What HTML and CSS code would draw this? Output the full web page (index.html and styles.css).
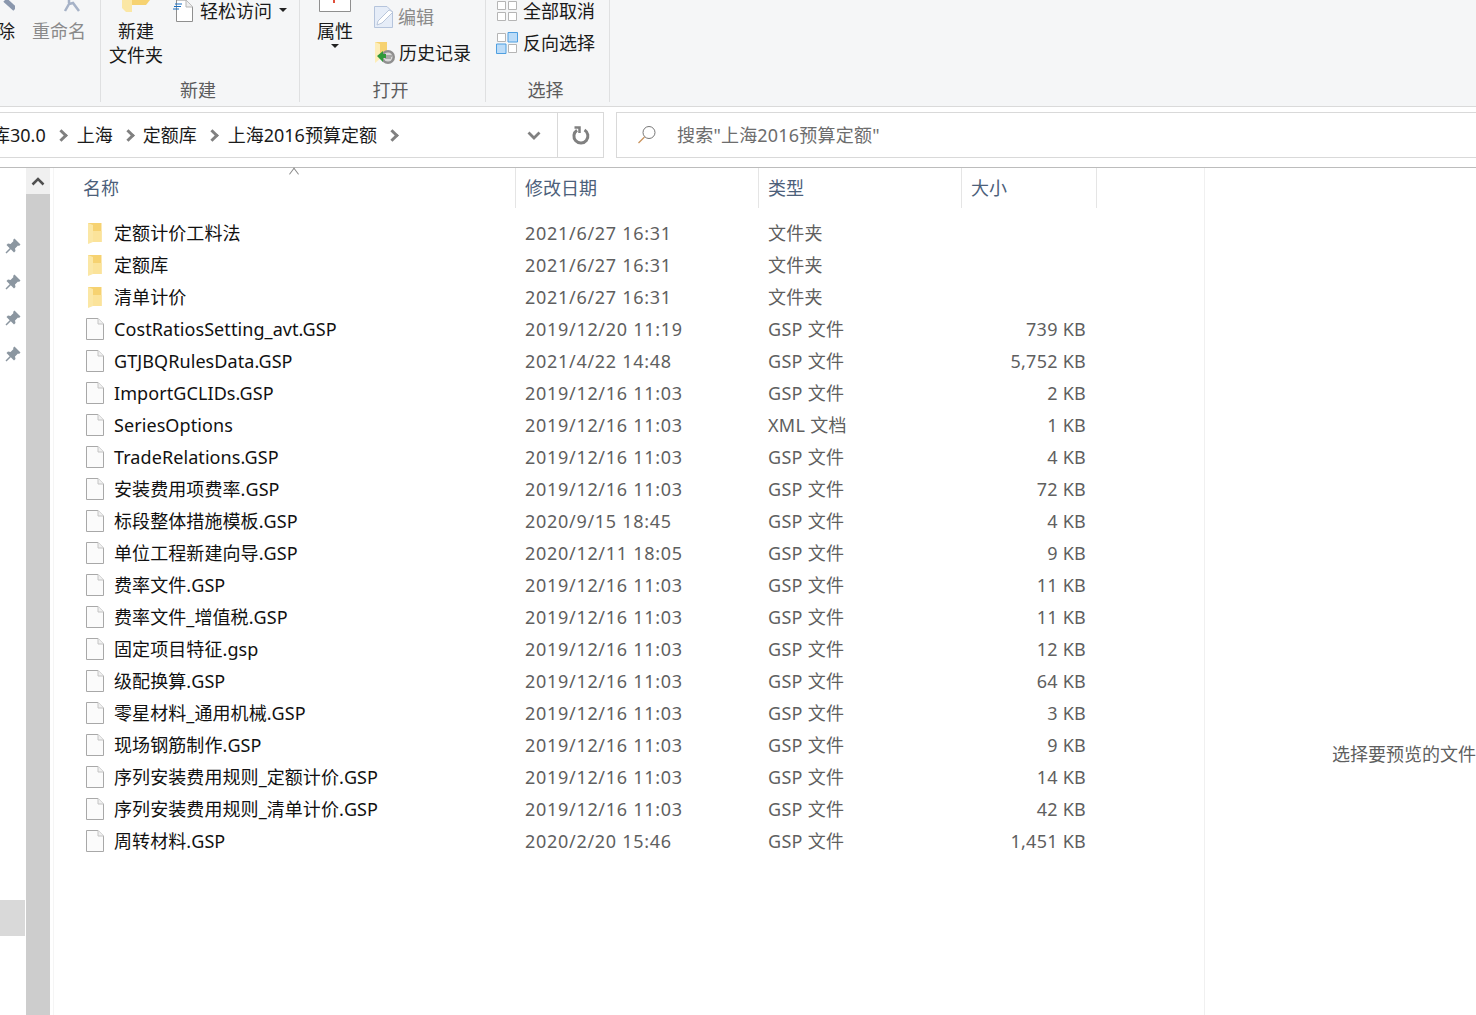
FILE: index.html
```html
<!DOCTYPE html>
<html lang="zh-CN">
<head>
  <meta charset="UTF-8">
  <title>上海2016预算定额</title>
  <link rel="stylesheet" href="styles.css">
</head>
<body>

<svg class="defs" width="0" height="0">
  <symbol id="doc" viewBox="0 0 18 22">
    <path d="M.5 .5H12L17.500 6V21.500H.5Z" fill="#fbfbfb" stroke="#a8a8a8"/>
    <path d="M12 .5V6H17.500" fill="#f0f0f0" stroke="#c4c4c4"/>
  </symbol>
  <symbol id="folder" viewBox="0 0 18 22">
    <path d="M2 1H15.500V20H2Z" fill="#f6d271"/>
    <path d="M7 9H15.500V20H7Z" fill="#fbe39a"/>
    <path d="M2 1L7 3V20L2 22Z" fill="#fbe7a5"/>
  </symbol>
  <symbol id="pin" viewBox="0 0 16 16">
    <path d="M9.500 .5L15.500 6.500L14 8L13 7.500L10 10.500L10.500 13L9 14.500L5.800 11.300L1.500 15.500L.5 14.500L4.700 10.200L1.500 7L3 5.500L5.500 6L8.500 3L8 2Z" fill="#8b96a0"/>
  </symbol>
</svg>

<div class="ribbon">
  <div class="group group-edit">
    <div class="group-body">
      <div class="big-btn btn-delete">
        <svg class="big-icon" width="36" height="12" viewBox="0 0 36 12"><path d="M26 0L36 9" stroke="#8a97ad" stroke-width="5" fill="none"/></svg>
        <span>删除</span>
      </div>
      <div class="big-btn btn-rename muted">
        <svg class="big-icon" width="54" height="12" viewBox="0 0 54 12"><path d="M37 0V3M33 11L37 4L41 3L47 11" stroke="#a6b2c7" stroke-width="2.500" fill="none"/></svg>
        <span>重命名</span>
      </div>
    </div>
    <div class="group-label"></div>
  </div>

  <div class="group group-new">
    <div class="group-body">
      <div class="big-btn btn-folder">
        <svg class="big-icon" width="30" height="12" viewBox="0 0 30 12"><path d="M1 0H11V12L5 12L1 8Z" fill="#fbe7a5"/><path d="M11 0H29L25 5H11Z" fill="#f6d271"/></svg>
        <span>新建</span>
        <span>文件夹</span>
      </div>
      <div class="small-col">
        <div class="small-row">
          <svg width="20" height="22" viewBox="0 0 20 22"><path d="M3.500 0H13L19.500 7V21.500H3.500Z" fill="#fff" stroke="#8f8f8f"/><path d="M13 0V7H19.500" fill="#eee" stroke="#b5b5b5"/><path d="M2 4H9M1 6.500H8M0 9H6" stroke="#1a6fc0" stroke-width="1"/></svg>
          <span>轻松访问</span>
          <i class="caret"></i>
        </div>
      </div>
    </div>
    <div class="group-label">新建</div>
  </div>

  <div class="group group-open">
    <div class="group-body">
      <div class="big-btn btn-props">
        <svg class="big-icon" width="32" height="12" viewBox="0 0 32 12"><path d="M.5 0V11.500H31.500V0" fill="#fff" stroke="#8f8f8f"/><path d="M14 0H16V3H14Z" fill="#e0503c"/></svg>
        <span>属性</span>
        <i class="caret"></i>
      </div>
      <div class="small-col">
        <div class="small-row muted">
          <svg width="20" height="22" viewBox="0 0 20 22"><path d="M.5 .5H13L18.500 6V21.500H.5Z" fill="#e6edf8" stroke="#b5c4dc"/><path d="M3 19L4 15L15 4L19 6L8 17Z" fill="#fff" stroke="#b9c6da"/></svg>
          <span>编辑</span>
        </div>
        <div class="small-row">
          <svg class="history-icon" width="22" height="22" viewBox="0 0 22 22"><path d="M1 0H13V14H1Z" fill="#f6d271"/><path d="M1 0L6 2V17L1 21Z" fill="#fdedb8"/><circle cx="14" cy="15" r="7" fill="#8f8f8f"/><circle cx="14" cy="15" r="4.500" fill="#d8d8d8"/><path d="M11 14H18M11 16H17" stroke="#777"/><path d="M3 14L9 9V12H12V16H9V20Z" fill="#2f9a3a"/></svg>
          <span>历史记录</span>
        </div>
      </div>
    </div>
    <div class="group-label">打开</div>
  </div>

  <div class="group group-select">
    <div class="group-body">
      <div class="small-col">
        <div class="small-row">
          <svg width="22" height="22" viewBox="0 0 22 22"><path d="M1.500 1.500H9.500V9.500H1.500ZM12.500 1.500H20.500V9.500H12.500ZM1.500 12.500H9.500V20.500H1.500ZM12.500 12.500H20.500V20.500H12.500Z" fill="#fff" stroke="#b5b5b5"/></svg>
          <span>全部取消</span>
        </div>
        <div class="small-row">
          <svg width="22" height="22" viewBox="0 0 22 22"><path d="M1.500 1.500H9.500V9.500H1.500ZM12.500 12.500H20.500V20.500H12.500Z" fill="#fff" stroke="#b5b5b5"/><path d="M12 .5H21.500V10H12ZM.5 12H10V21.500H.5Z" fill="#bcdcf8" stroke="#4f9fe0"/></svg>
          <span>反向选择</span>
        </div>
      </div>
    </div>
    <div class="group-label">选择</div>
  </div>
</div>

<div class="address-row">
  <div class="address-box">
    <div class="crumbs">
      <span>库30.0</span><i class="chev"></i>
      <span>上海</span><i class="chev"></i>
      <span class="tight">定额库</span><i class="chev"></i>
      <span>上海2016预算定额</span><i class="chev"></i>
    </div>
    <div class="drop-btn">
      <svg width="14" height="9" viewBox="0 0 14 9"><path d="M1.500 1.500L7 7L12.500 1.500" fill="none" stroke="#808080" stroke-width="2.800"/></svg>
    </div>
    <div class="refresh-btn">
      <svg width="18" height="19" viewBox="0 0 18 19"><path d="M5 4.200A7 7 0 1 0 12.500 4" fill="none" stroke="#808080" stroke-width="3"/><path d="M2.500 1.500H7.500V7" fill="none" stroke="#808080" stroke-width="2.500"/></svg>
    </div>
  </div>
  <div class="search-box">
    <svg width="20" height="20" viewBox="0 0 20 20"><circle cx="12" cy="7.500" r="6" fill="none" stroke="#777"/><path d="M7.500 12L1.500 18" stroke="#c9925a" stroke-width="1.200"/></svg>
    <span>搜索"上海2016预算定额"</span>
  </div>
</div>

<div class="main">
  <div class="nav">
    <div class="nav-item"><svg width="16" height="16"><use href="#pin"/></svg></div>
    <div class="nav-item"><svg width="16" height="16"><use href="#pin"/></svg></div>
    <div class="nav-item"><svg width="16" height="16"><use href="#pin"/></svg></div>
    <div class="nav-item"><svg width="16" height="16"><use href="#pin"/></svg></div>
    <div class="nav-item selected"></div>
  </div>
  <div class="scrollbar">
    <div class="scroll-up">
      <svg width="14" height="9" viewBox="0 0 14 9"><path d="M1.500 7.500L7 2L12.500 7.500" fill="none" stroke="#505050" stroke-width="2.500"/></svg>
    </div>
    <div class="scroll-thumb"></div>
  </div>

  <div class="files">
    <div class="head">
      <div class="col col-name">名称<i class="sort"></i></div>
      <div class="col">修改日期</div>
      <div class="col">类型</div>
      <div class="col">大小</div>
    </div>
    <div class="rows">
      <div class="row"><div class="name"><svg width="18" height="22"><use href="#folder"/></svg>定额计价工料法</div><div class="date">2021/6/27 16:31</div><div>文件夹</div><div class="size"></div></div>
      <div class="row"><div class="name"><svg width="18" height="22"><use href="#folder"/></svg>定额库</div><div class="date">2021/6/27 16:31</div><div>文件夹</div><div class="size"></div></div>
      <div class="row"><div class="name"><svg width="18" height="22"><use href="#folder"/></svg>清单计价</div><div class="date">2021/6/27 16:31</div><div>文件夹</div><div class="size"></div></div>
      <div class="row"><div class="name"><svg width="18" height="22"><use href="#doc"/></svg>CostRatiosSetting_avt.GSP</div><div class="date">2019/12/20 11:19</div><div>GSP 文件</div><div class="size">739 KB</div></div>
      <div class="row"><div class="name"><svg width="18" height="22"><use href="#doc"/></svg>GTJBQRulesData.GSP</div><div class="date">2021/4/22 14:48</div><div>GSP 文件</div><div class="size">5,752 KB</div></div>
      <div class="row"><div class="name"><svg width="18" height="22"><use href="#doc"/></svg>ImportGCLIDs.GSP</div><div class="date">2019/12/16 11:03</div><div>GSP 文件</div><div class="size">2 KB</div></div>
      <div class="row"><div class="name"><svg width="18" height="22"><use href="#doc"/></svg>SeriesOptions</div><div class="date">2019/12/16 11:03</div><div>XML 文档</div><div class="size">1 KB</div></div>
      <div class="row"><div class="name"><svg width="18" height="22"><use href="#doc"/></svg>TradeRelations.GSP</div><div class="date">2019/12/16 11:03</div><div>GSP 文件</div><div class="size">4 KB</div></div>
      <div class="row"><div class="name"><svg width="18" height="22"><use href="#doc"/></svg>安装费用项费率.GSP</div><div class="date">2019/12/16 11:03</div><div>GSP 文件</div><div class="size">72 KB</div></div>
      <div class="row"><div class="name"><svg width="18" height="22"><use href="#doc"/></svg>标段整体措施模板.GSP</div><div class="date">2020/9/15 18:45</div><div>GSP 文件</div><div class="size">4 KB</div></div>
      <div class="row"><div class="name"><svg width="18" height="22"><use href="#doc"/></svg>单位工程新建向导.GSP</div><div class="date">2020/12/11 18:05</div><div>GSP 文件</div><div class="size">9 KB</div></div>
      <div class="row"><div class="name"><svg width="18" height="22"><use href="#doc"/></svg>费率文件.GSP</div><div class="date">2019/12/16 11:03</div><div>GSP 文件</div><div class="size">11 KB</div></div>
      <div class="row"><div class="name"><svg width="18" height="22"><use href="#doc"/></svg>费率文件_增值税.GSP</div><div class="date">2019/12/16 11:03</div><div>GSP 文件</div><div class="size">11 KB</div></div>
      <div class="row"><div class="name"><svg width="18" height="22"><use href="#doc"/></svg>固定项目特征.gsp</div><div class="date">2019/12/16 11:03</div><div>GSP 文件</div><div class="size">12 KB</div></div>
      <div class="row"><div class="name"><svg width="18" height="22"><use href="#doc"/></svg>级配换算.GSP</div><div class="date">2019/12/16 11:03</div><div>GSP 文件</div><div class="size">64 KB</div></div>
      <div class="row"><div class="name"><svg width="18" height="22"><use href="#doc"/></svg>零星材料_通用机械.GSP</div><div class="date">2019/12/16 11:03</div><div>GSP 文件</div><div class="size">3 KB</div></div>
      <div class="row"><div class="name"><svg width="18" height="22"><use href="#doc"/></svg>现场钢筋制作.GSP</div><div class="date">2019/12/16 11:03</div><div>GSP 文件</div><div class="size">9 KB</div></div>
      <div class="row"><div class="name"><svg width="18" height="22"><use href="#doc"/></svg>序列安装费用规则_定额计价.GSP</div><div class="date">2019/12/16 11:03</div><div>GSP 文件</div><div class="size">14 KB</div></div>
      <div class="row"><div class="name"><svg width="18" height="22"><use href="#doc"/></svg>序列安装费用规则_清单计价.GSP</div><div class="date">2019/12/16 11:03</div><div>GSP 文件</div><div class="size">42 KB</div></div>
      <div class="row"><div class="name"><svg width="18" height="22"><use href="#doc"/></svg>周转材料.GSP</div><div class="date">2020/2/20 15:46</div><div>GSP 文件</div><div class="size">1,451 KB</div></div>
    </div>
  </div>

  <div class="preview">选择要预览的文件</div>
</div>

</body>
</html>
```

FILE: styles.css
```css
body {
  margin: 0;
  height: 100vh;
  overflow: hidden;
  display: flex;
  flex-direction: column;
  background: #fff;
  color: #1a1a1a;
  font-family: "Noto Sans", "Noto Sans CJK SC", sans-serif;
  font-size: 18px;
  line-height: 24px;
}
.defs {
  position: absolute;
}
svg {
  display: block;
  flex-shrink: 0;
}

/* ribbon */
.ribbon {
  height: 102px;
  padding-bottom: 4px;
  display: flex;
  flex-shrink: 0;
  background: #f5f6f7;
  border-bottom: 1px solid #dadada;
  overflow: hidden;
}
.group {
  display: flex;
  flex-direction: column;
  flex-shrink: 0;
  border-right: 1px solid #dfe0e1;
}
.group-edit { width: 100px; }
.group-new { width: 198px; }
.group-open { width: 185px; }
.group-select { width: 123px; }
.group-body {
  height: 78px;
  display: flex;
}
.group-label {
  height: 24px;
  padding-right: 4px;
  text-align: center;
  color: #5c5c5c;
}
.group-edit .group-body {
  justify-content: flex-end;
  padding-right: 14px;
  gap: 17px;
}
.big-btn {
  display: flex;
  flex-direction: column;
  align-items: center;
  flex-shrink: 0;
}
.big-icon {
  margin-bottom: 7px;
}
.muted {
  color: #8a8a8a;
}
.btn-folder {
  margin-left: 8px;
}
.group-new .small-col {
  margin-left: 10px;
}
.group-new .small-row {
  gap: 7px;
}
.btn-props {
  margin-left: 17px;
}
.btn-props .caret {
  margin-top: 1px;
}
.group-open .small-col {
  margin-left: 21px;
  padding-top: 6px;
  gap: 14px;
}
.group-open .small-row {
  gap: 4px;
}
.history-icon {
  margin-right: -1px;
}
.group-select .small-col {
  margin-left: 10px;
  gap: 10px;
}
.group-select .small-row {
  gap: 5px;
}
.small-col {
  display: flex;
  flex-direction: column;
}
.small-row {
  height: 22px;
  display: flex;
  align-items: center;
  gap: 6px;
  white-space: nowrap;
}
.caret {
  display: block;
  width: 0;
  height: 0;
  border: 4px solid transparent;
  border-top-color: #222;
  border-bottom: 0;
}
.small-row .caret {
  margin-top: -2px;
}

/* address bar */
.address-row {
  height: 61px;
  padding-top: 5px;
  box-sizing: border-box;
  display: flex;
  flex-shrink: 0;
  gap: 12px;
  border-bottom: 1px solid #bcbcbc;
}
.address-box {
  width: 614px;
  height: 46px;
  margin-left: -10px;
  box-sizing: border-box;
  display: flex;
  align-items: center;
  flex-shrink: 0;
  border: 1px solid #d9d9d9;
}
.crumbs {
  flex: 1;
  display: flex;
  align-items: center;
  gap: 11px;
  white-space: nowrap;
  overflow: hidden;
}
.crumbs span:first-child {
  margin-left: 1px;
}
.crumbs .tight {
  margin-left: -1px;
}
.chev {
  display: block;
  width: 6px;
  height: 6px;
  border-top: 3px solid #808080;
  border-right: 3px solid #808080;
  transform: rotate(45deg);
  flex-shrink: 0;
}
.drop-btn {
  width: 46px;
  height: 100%;
  display: flex;
  align-items: center;
  justify-content: center;
  box-sizing: border-box;
}
.refresh-btn {
  width: 46px;
  height: 100%;
  display: flex;
  align-items: center;
  justify-content: center;
  box-sizing: border-box;
  border-left: 1px solid #d9d9d9;
}
.search-box {
  flex: 1;
  height: 46px;
  margin-right: -5px;
  box-sizing: border-box;
  display: flex;
  align-items: center;
  gap: 20px;
  padding-left: 20px;
  border: 1px solid #d9d9d9;
  color: #6d6d6d;
  letter-spacing: .2px;
}

/* left nav and its scrollbar */
.main {
  flex: 1;
  min-height: 0;
  display: flex;
}
.nav {
  width: 26px;
  flex-shrink: 0;
  padding-top: 60px;
  padding-bottom: 79px;
  box-sizing: border-box;
  display: flex;
  flex-direction: column;
}
.nav-item {
  height: 36px;
  width: 25px;
  display: flex;
  align-items: center;
  justify-content: center;
}
.nav-item.selected {
  margin-top: auto;
  background: #d9d9d9;
}
.scrollbar {
  width: 24px;
  flex-shrink: 0;
  display: flex;
  flex-direction: column;
}
.scroll-up {
  height: 26px;
  background: #f0f0f0;
  display: flex;
  align-items: center;
  justify-content: center;
}
.scroll-thumb {
  flex: 1;
  background: #cdcdcd;
}

/* file list */
.files {
  width: 1152px;
  margin-left: 3px;
  flex-shrink: 0;
  box-sizing: border-box;
  border-left: 1px solid #f5f5f5;
  border-right: 1px solid #f0f0f0;
}
.head {
  height: 40px;
  display: grid;
  grid-template-columns: 462px 243px 203px 135px;
  color: #4c607a;
}
.col {
  display: flex;
  align-items: center;
  padding-left: 9px;
  border-right: 1px solid #e5e5e5;
}
.col-name {
  padding-left: 29px;
  position: relative;
}
.sort {
  position: absolute;
  left: 236px;
  top: 2px;
  width: 7px;
  height: 7px;
  border-top: 1px solid #8a8a8a;
  border-left: 1px solid #8a8a8a;
  transform: rotate(45deg) skew(8deg, 8deg);
}
.rows {
  padding-top: 9px;
}
.row {
  height: 32px;
  display: grid;
  grid-template-columns: 471px 243px 203px 115px;
  align-items: center;
  color: #5f5f5f;
  letter-spacing: .3px;
}
.name {
  width: 461px;
  box-sizing: border-box;
  display: flex;
  align-items: center;
  gap: 10px;
  padding-left: 32px;
  color: #111;
  white-space: nowrap;
  letter-spacing: .08px;
}
.date {
  letter-spacing: .7px;
}
.size {
  text-align: right;
  letter-spacing: .25px;
}

/* preview pane */
.preview {
  flex: 1;
  min-width: 0;
  padding-top: 574px;
  box-sizing: border-box;
  text-align: right;
  white-space: nowrap;
  color: #5f5f5f;
}
```
